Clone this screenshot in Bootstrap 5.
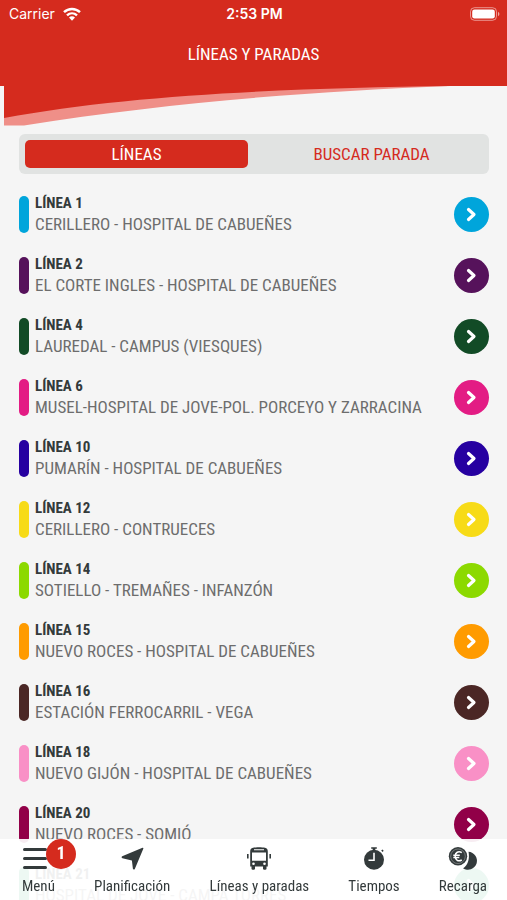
<!DOCTYPE html>
<html lang="es">
<head>
<meta charset="utf-8">
<meta name="viewport" content="width=device-width, initial-scale=1">
<title>Líneas y paradas</title>
<link href="https://cdn.jsdelivr.net/npm/bootstrap@5.3.0/dist/css/bootstrap.min.css" rel="stylesheet">
<style>
  :root { --brand: #d52b1e; --ink: #333a3b; --paper: #f5f5f5; }
  body { background: var(--paper); font-family: "Roboto Condensed", Roboto, sans-serif; }
  .top-bar { background: var(--brand); }
  .status { font: 14px/28px Inter, sans-serif; display: grid; grid-template-columns: 1fr auto 1fr; padding: 0 7px 0 9px; }
  .status .clock { font-weight: 600; }
  .screen-title { font-size: 17px; line-height: 52px; padding-bottom: 6px; }
  .swoosh { display: block; width: 100%; height: 40px; }
  .switcher { background: #e1e3e2; margin: 8px 18px 10px 19px; border-radius: 6px; }
  .switcher > div { padding: 6px; }
  .switcher .btn { font-size: 17px; line-height: 28px; color: var(--brand); border-radius: 5px; }
  .switcher .btn.active { background: var(--brand); color: #fff; }
  .line-list { scrollbar-width: none; }
  .line-list::-webkit-scrollbar { display: none; }
  .line-row { height: 61px; padding: 0 18px 0 19px; gap: 6px; color: var(--tint); }
  .stripe { width: 10px; height: 37px; border-radius: 5px; background: var(--tint); }
  .line-text { padding-bottom: 2px; }
  .line-name { font-size: 15px; line-height: 20px; color: var(--ink); }
  .line-route { font-size: 17px; line-height: 22px; color: #6d6d6d; }
  .disc { width: 35px; height: 35px; background: var(--tint); }
  .tab-bar { background: rgba(255, 255, 255, .93); height: 61px; padding: 8px 20px 0 22px; }
  .tab-bar a { font-size: 15px; line-height: 20px; color: var(--ink); gap: 5px; }
  .count { left: 24px; top: -8px; width: 30px; height: 30px; font-size: 18px; line-height: 28px; background: var(--brand); }
</style>
</head>
<body class="vh-100 overflow-hidden d-flex flex-column">
<header class="flex-shrink-0">
  <div class="top-bar text-white">
    <div class="status">
      <span class="d-flex align-items-center gap-2">Carrier
        <svg width="18" height="14" viewBox="0 0 18 14" fill="none" stroke="#fff" stroke-width="2.4" aria-hidden="true"><path d="M1 5.2C5.5.9 12.500.9 17 5.200M4 8.400c2.900-2.700 7.100-2.700 10 0"/><path d="M6 10.500c1.800-1.600 4.200-1.600 6 0L9 13.700z" fill="#fff" stroke="none"/></svg>
      </span>
      <span class="clock">2:53 PM</span>
      <span class="d-flex align-items-center justify-content-end">
        <svg width="31" height="14" viewBox="0 0 31 14" aria-hidden="true"><rect x="1.500" y=".7" width="26" height="12.600" rx="4" fill="none" stroke="#fff" stroke-opacity=".5"/><rect x="3.200" y="2.500" width="22.600" height="9" rx="2.300" fill="#fff"/><path d="M29 4.800c1.900.9 1.900 3.500 0 4.400z" fill="#fff" fill-opacity=".6"/></svg>
      </span>
    </div>
    <h1 class="screen-title text-center fw-normal m-0">LÍNEAS Y PARADAS</h1>
  </div>
  <svg class="swoosh" viewBox="0 0 507 40" preserveAspectRatio="none" aria-hidden="true">
    <path d="M4 0H450C320 5 170 16 24 39.500H4z" fill="#ef8f88"/>
    <path d="M4 0H450C300 2 130 8 4 32z" fill="#d52b1e"/>
  </svg>
</header>
<nav class="switcher d-flex flex-shrink-0" aria-label="Vista">
  <div class="w-50"><button type="button" class="btn border-0 p-0 w-100 d-block active">LÍNEAS</button></div>
  <div class="w-50"><button type="button" class="btn border-0 p-0 w-100 d-block">BUSCAR PARADA</button></div>
</nav>
<main class="line-list flex-fill overflow-auto">
  <svg class="d-none" aria-hidden="true"><symbol id="chev" viewBox="0 0 35 35"><path d="M14.500 12.500l5.500 5-5.500 5" fill="none" stroke="#fff" stroke-width="3.200" stroke-linecap="round" stroke-linejoin="round"/></symbol></svg>
  <ul class="list-unstyled m-0" id="lines"></ul>
</main>
<nav class="tab-bar fixed-bottom d-flex justify-content-between align-items-start" aria-label="Principal">
  <a href="#" class="d-flex flex-column text-decoration-none position-relative">
    <svg width="26" height="24" viewBox="0 0 26 24" stroke="#333a3b" stroke-width="3" stroke-linecap="round" aria-hidden="true"><path d="M2.500 2.500h21M2.500 11.500h21M2.500 20.500h21"/></svg>
    <span>Menú</span>
    <span class="count position-absolute rounded-circle text-white text-center fw-bold">1</span>
  </a>
  <a href="#" class="d-flex flex-column align-items-center text-decoration-none">
    <svg width="24" height="24" viewBox="0 0 24 24" fill="#333a3b" aria-hidden="true"><path d="M22.500.7a.8.8 0 0 1 .8 1.100L14.800 21.900c-.4 1-1.700.9-1.900-.1l-1-8.200-9.500-2.400c-1-.3-1.100-1.400-.2-1.900z"/></svg>
    <span>Planificación</span>
  </a>
  <a href="#" class="d-flex flex-column align-items-center text-decoration-none">
    <svg width="26" height="24" viewBox="0 0 26 24" aria-hidden="true"><path d="M7 .8C10 .1 16 .1 19 .8c2 .5 2.800 1.700 2.800 3.600V19.500h-1.300v2.200c0 1.400-3.500 1.400-3.500 0v-2.200H9v2.200c0 1.400-3.500 1.400-3.500 0v-2.200H4.200V4.400C4.200 2.500 5 1.300 7 .8zM1 7h1.600v4.500H1zM23.400 7H25v4.500h-1.600z" fill="#333a3b"/><path d="M8 2.200h10v1H8zM6 5.500h14v8.300H6z" fill="#fff"/><circle cx="7.500" cy="16.800" r="1.300" fill="#fff"/><circle cx="18.500" cy="16.800" r="1.300" fill="#fff"/></svg>
    <span>Líneas y paradas</span>
  </a>
  <a href="#" class="d-flex flex-column align-items-center text-decoration-none">
    <svg width="24" height="24" viewBox="0 0 24 24" aria-hidden="true"><circle cx="12" cy="12.800" r="10" fill="#333a3b"/><path d="M9.200.3h5.600v1.500H9.200zM10.700 1.500h2.600v2h-2.600zM19.200 3.600l1.200-1.100 1.300 1.300-1.100 1.200z" fill="#333a3b"/><path d="M12 5.800v7.500H6.500" fill="none" stroke="#fff" stroke-width="1.600"/></svg>
    <span>Tiempos</span>
  </a>
  <a href="#" class="d-flex flex-column align-items-center text-decoration-none">
    <svg width="30" height="24" viewBox="0 0 30 24" aria-hidden="true"><path d="M20.500 4.800a9 9 0 1 1-5.500 16.500C19.500 18.500 22 12 20.500 4.800z" fill="#333a3b"/><circle cx="10" cy="9.300" r="9.200" fill="#333a3b"/><circle cx="10" cy="9.300" r="7.300" fill="none" stroke="#fff" stroke-opacity=".6" stroke-width=".5"/><path d="M13.800 5.600c-3.400-2-6.600-.2-6.600 3.700s3.200 5.700 6.600 3.700M5.300 8.200h6.500M5.300 10.400h6" fill="none" stroke="#fff" stroke-width="1.500"/></svg>
    <span>Recarga</span>
  </a>
</nav>
<script>
  const lines = [
    ["1", "CERILLERO - HOSPITAL DE CABUEÑES", "#00a5db"],
    ["2", "EL CORTE INGLES - HOSPITAL DE CABUEÑES", "#56125b"],
    ["4", "LAUREDAL - CAMPUS (VIESQUES)", "#124b26"],
    ["6", "MUSEL-HOSPITAL DE JOVE-POL. PORCEYO Y ZARRACINA", "#e31c84"],
    ["10", "PUMARÍN - HOSPITAL DE CABUEÑES", "#2600a1"],
    ["12", "CERILLERO - CONTRUECES", "#f7db17"],
    ["14", "SOTIELLO - TREMAÑES - INFANZÓN", "#8cd900"],
    ["15", "NUEVO ROCES - HOSPITAL DE CABUEÑES", "#ff9b00"],
    ["16", "ESTACIÓN FERROCARRIL - VEGA", "#4b2725"],
    ["18", "NUEVO GIJÓN - HOSPITAL DE CABUEÑES", "#f990c6"],
    ["20", "NUEVO ROCES - SOMIÓ", "#910048"],
    ["21", "HOSPITAL DE JOVE - CAMPA TORRES", "#00a05a"]
  ];
  document.getElementById("lines").innerHTML = lines.map(([num, route, tint]) => `
    <li><a href="#" class="line-row d-flex align-items-center text-decoration-none" style="--tint:${tint}">
      <span class="stripe flex-shrink-0"></span>
      <span class="line-text d-flex flex-column flex-fill text-nowrap">
        <span class="line-name fw-bold">LÍNEA ${num}</span>
        <span class="line-route">${route}</span>
      </span>
      <svg class="disc rounded-circle flex-shrink-0" aria-hidden="true"><use href="#chev"/></svg>
    </a></li>`).join("");
</script>
<script src="https://cdn.jsdelivr.net/npm/bootstrap@5.3.0/dist/js/bootstrap.bundle.min.js"></script>
</body>
</html>
